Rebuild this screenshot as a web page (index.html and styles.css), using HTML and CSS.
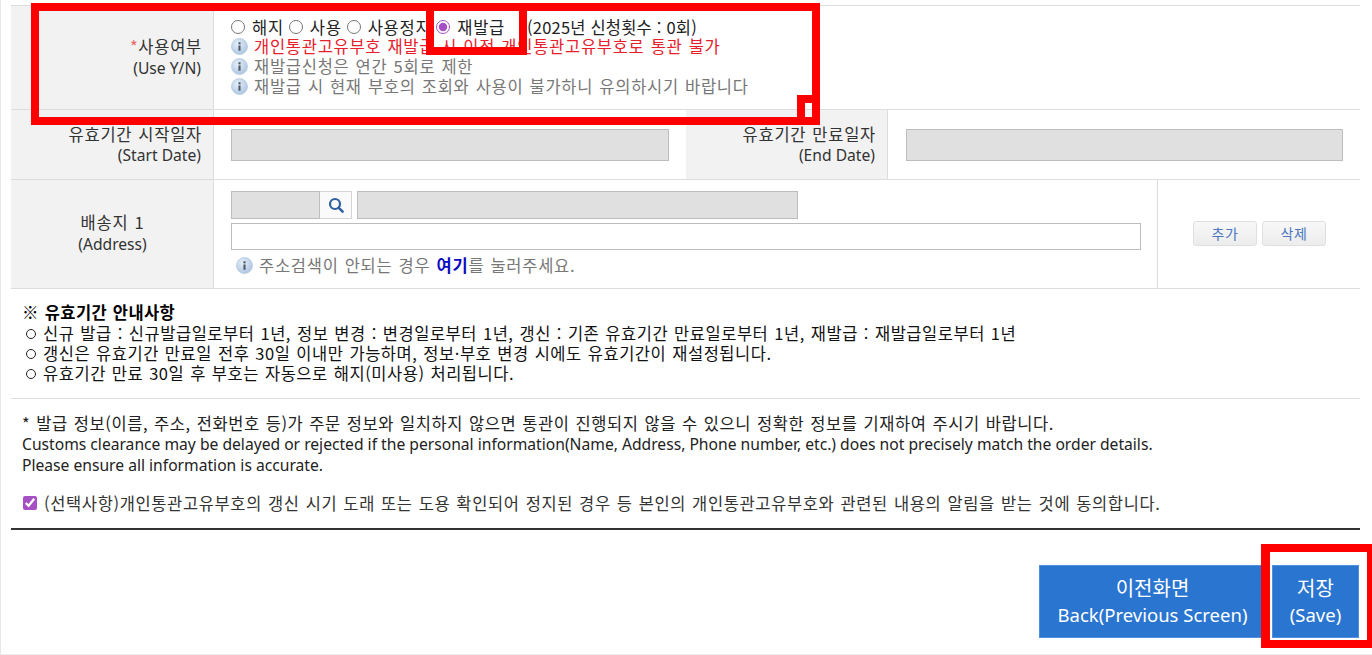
FILE: index.html
```html
<!DOCTYPE html>
<html lang="ko">
<head>
<meta charset="utf-8">
<title>개인통관고유부호</title>
<link rel="stylesheet" href="styles.css">
</head>
<body>
<main class="page">
  <section class="form">
    <div class="row row-use">
      <div class="label"><div><span class="req">*</span>사용여부</div><div class="en">(Use Y/N)</div></div>
      <div class="value use-value">
        <div class="line radios">
          <label class="radio"><input type="radio" name="use">해지</label>
          <label class="radio"><input type="radio" name="use">사용</label>
          <label class="radio"><input type="radio" name="use">사용정지</label>
          <label class="radio reissue"><input type="radio" name="use" checked>재발급</label>
          <span class="count">(2025년 신청횟수 : 0회)</span>
        </div>
        <div class="line red"><svg class="info" viewBox="0 0 16 16"><use href="#i"/></svg>개인통관고유부호 재발급 시 이전 개인통관고유부호로 통관 불가</div>
        <div class="line grey"><svg class="info" viewBox="0 0 16 16"><use href="#i"/></svg>재발급신청은 연간 5회로 제한</div>
        <div class="line grey"><svg class="info" viewBox="0 0 16 16"><use href="#i"/></svg>재발급 시 현재 부호의 조회와 사용이 불가하니 유의하시기 바랍니다</div>
      </div>
    </div>
    <div class="row row-date">
      <div class="label"><div>유효기간 시작일자</div><div class="en">(Start Date)</div></div>
      <div class="value date-value"><div class="field"></div></div>
      <div class="label"><div>유효기간 만료일자</div><div class="en">(End Date)</div></div>
      <div class="value date-value end"><div class="field"></div></div>
    </div>
    <div class="row row-addr">
      <div class="label center"><div>배송지 1</div><div class="en">(Address)</div></div>
      <div class="value addr-value">
        <div class="zip-line">
          <div class="field zip"></div>
          <div class="search"><svg viewBox="0 0 18 18" width="18" height="18"><circle cx="8" cy="8" r="5" fill="none" stroke="#2f5f9e" stroke-width="2.2"/><path d="M11.6 11.6 L15.6 15.6" stroke="#2f5f9e" stroke-width="2.6" stroke-linecap="round"/></svg></div>
          <div class="field road"></div>
        </div>
        <div class="field blank"></div>
        <div class="hint grey"><svg class="info" viewBox="0 0 16 16"><use href="#i"/></svg>주소검색이 안되는 경우 <b class="here">여기</b>를 눌러주세요.</div>
      </div>
      <div class="value addr-actions">
        <div class="mini">추가</div>
        <div class="mini">삭제</div>
      </div>
    </div>
  </section>

  <section class="guide">
    <h2 class="guide-title">※ 유효기간 안내사항</h2>
    <ul class="guide-list">
      <li>신규 발급 : 신규발급일로부터 1년, 정보 변경 : 변경일로부터 1년, 갱신 : 기존 유효기간 만료일로부터 1년, 재발급 : 재발급일로부터 1년</li>
      <li>갱신은 유효기간 만료일 전후 30일 이내만 가능하며, 정보·부호 변경 시에도 유효기간이 재설정됩니다.</li>
      <li>유효기간 만료 30일 후 부호는 자동으로 해지(미사용) 처리됩니다.</li>
    </ul>
  </section>

  <section class="notice">
    <p class="notice-ko">* 발급 정보(이름, 주소, 전화번호 등)가 주문 정보와 일치하지 않으면 통관이 진행되지 않을 수 있으니 정확한 정보를 기재하여 주시기 바랍니다.</p>
    <p class="en">Customs clearance may be delayed or rejected if the personal information(Name, Address, Phone number, etc.) does not precisely match the order details.</p>
    <p class="en">Please ensure all information is accurate.</p>
  </section>

  <label class="agree"><input type="checkbox" checked>(선택사항)개인통관고유부호의 갱신 시기 도래 또는 도용 확인되어 정지된 경우 등 본인의 개인통관고유부호와 관련된 내용의 알림을 받는 것에 동의합니다.</label>

  <div class="actions">
    <button class="btn back" type="button">이전화면<br><span class="en">Back(Previous Screen)</span></button>
    <button class="btn save" type="button">저장<br><span class="en">(Save)</span></button>
  </div>

  <div class="mark mark-main"></div>
  <div class="mark mark-radio"></div>
  <div class="mark mark-corner"></div>
  <div class="mark mark-save"></div>
</main>
<svg class="defs" width="0" height="0">
  <defs>
    <radialGradient id="g" cx="40%" cy="35%" r="70%"><stop offset="0" stop-color="#e8f0f8"/><stop offset="1" stop-color="#a9c3e0"/></radialGradient>
    <g id="i"><circle cx="8" cy="8" r="7.5" fill="url(#g)" stroke="#b7cbe2" stroke-width=".8"/><rect x="7" y="4" width="2" height="2" fill="#4d5a6b"/><rect x="7" y="7" width="2" height="5" fill="#4d5a6b"/></g>
  </defs>
</svg>
</body>
</html>
```

FILE: styles.css
```css
* { box-sizing: border-box; }
html, body { margin: 0; padding: 0; background: #fff; }
body {
  font-family: "Noto Sans CJK KR", "Noto Sans", sans-serif;
  font-size: 16.5px;
  letter-spacing: 0.73px;
  word-spacing: 0.8px;
  color: #222;
  overflow: hidden;
}
.en {
  font-family: "Noto Sans", "Open Sans", sans-serif;
  font-size: 15.65px;
  letter-spacing: 0;
  word-spacing: 0;
}
.defs { position: absolute; }
.page {
  position: relative;
  width: 1372px;
  height: 655px;
  overflow: hidden;
  padding: 5px 12px 0 11px;
  border-left: 1px solid #e6e6e6;
  border-bottom: 1px solid #eee;
}
.form { border-top: 1px solid #ddd; margin-left: -1px; }
.row { display: grid; border-bottom: 1px solid #ddd; }
.row-use { grid-template-columns: 202px 1fr; height: 104px; }
.row-date { grid-template-columns: 202px 473px 201px 1fr; height: 70px; }
.row-addr { grid-template-columns: 202px 944px 1fr; height: 109px; }
.label {
  background: #f2f2f2;
  padding: 0 11px 0 0;
  text-align: right;
  line-height: 22px;
  color: #333;
  display: flex;
  flex-direction: column;
  justify-content: center;
}
.label .en { margin: -1.5px 1px 0 0; }
.row-use .label { padding-bottom: 1px; }
.row-use .label .en { margin-top: 0.5px; }
.label.center { text-align: center; padding: 0 0 2px 1px; }
.label.center .en { margin: 0.5px 0 0; }
.value { border-left: 1px solid #ddd; }
.req { color: #e66; }
.use-value { padding: 10px 0 0 17px; }
.line { display: flex; align-items: center; height: 20px; white-space: nowrap; }
.radios { color: #222; padding-top: 2px; }
.radio { display: inline-flex; align-items: center; margin-right: 5px; }
.radio input { margin: 0 7px 0 0; width: 14px; height: 14px; accent-color: #a64fc4; }
.reissue { margin-right: 22px; }
.count { letter-spacing: 0.2px; word-spacing: 0; }
.red { color: #e8202c; }
.grey { color: #777; }
.info { width: 17px; height: 17px; flex: none; margin-right: 6px; }
.date-value { padding: 19px 17px 0 17px; }
.date-value.end { padding-left: 18px; }
.field { height: 32px; background: #e0e0e0; border: 1px solid #bdbdbd; }
.addr-value { padding: 11px 16px 0 17px; }
.zip-line { display: flex; height: 28px; }
.field.zip { width: 89px; height: 28px; }
.search {
  width: 32px;
  height: 28px;
  border: 1px solid #d5d5d5;
  border-left: 0;
  background: #fafafa;
  display: flex;
  align-items: center;
  justify-content: center;
}
.field.road { width: 441px; height: 28px; margin-left: 5px; }
.field.blank { height: 27px; margin-top: 4px; background: #fff; }
.hint { display: flex; align-items: center; height: 20px; margin: 5px 0 0 5px; white-space: pre; }
.here { color: #0a0ac0; font-weight: 700; white-space: pre; }
.addr-actions { display: flex; align-items: flex-start; padding: 41px 0 0 35px; gap: 5px; }
.mini {
  width: 64px;
  height: 25px;
  line-height: 23px;
  text-align: center;
  font-size: 14px;
  color: #4d76c0;
  background: linear-gradient(#f8f8f8, #ececec);
  border: 1px solid #e0e0e0;
  border-radius: 3px;
}
.guide { padding: 13px 0 0 11px; line-height: 20px; color: #111; border-bottom: 1px solid #ddd; height: 110px; margin-left: -1px; }
.guide-title { margin: 0; font-size: 16.5px; font-weight: 700; line-height: 20px; color: #000; letter-spacing: 0.4px; }
.guide-list { list-style: none; margin: 1px 0 0; padding: 0; letter-spacing: 0.53px; }
.guide-list li { position: relative; padding-left: 21px; white-space: nowrap; }
.guide-list li::before {
  content: "";
  position: absolute;
  left: 4px;
  top: 6px;
  width: 8px;
  height: 8px;
  border: 1.5px solid #222;
  border-radius: 50%;
}
.notice { padding: 14px 0 0 11px; margin-left: -1px; color: #222; line-height: 21px; }
.notice p { margin: 0; white-space: nowrap; }
.notice-ko { letter-spacing: 0.57px; }
.agree {
  display: flex;
  align-items: center;
  height: 20px;
  margin: 17px 0 0 11px;
  white-space: nowrap;
  color: #333;
  letter-spacing: 0.63px;
}
.agree input { width: 14px; height: 14px; margin: 0 7px 0 0; accent-color: #a64fc4; }
.actions {
  margin: 15px 0 0 -1px;
  padding-top: 35px;
  border-top: 2px solid #333;
  display: flex;
  justify-content: flex-end;
  gap: 6px;
}
.btn {
  height: 73px;
  font: inherit;
  font-size: 20px;
  line-height: 26px;
  color: #fff;
  background: #2a75d0;
  border: 1px solid #4f8fdc;
  padding: 0;
}
.btn .en { font-size: 18.5px; }
.back { width: 227px; }
.save { width: 87px; margin-right: 1px; }
.mark { position: absolute; border: 8px solid #f00; }
.mark-main { left: 30px; top: 3px; width: 789px; height: 122px; }
.mark-radio { left: 425px; top: 3px; width: 101px; height: 52px; }
.mark-corner { left: 796px; top: 95px; width: 23px; height: 30px; }
.mark-save { left: 1260px; top: 544px; width: 111px; height: 104px; border-width: 8px 5px 8px 9px; }
```
